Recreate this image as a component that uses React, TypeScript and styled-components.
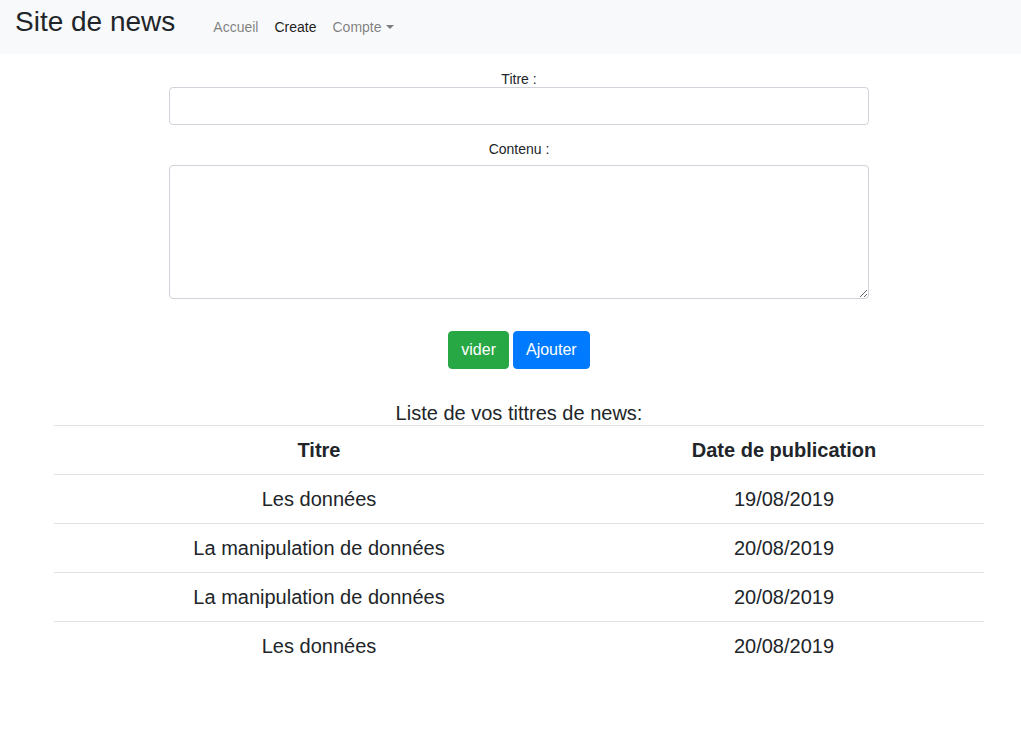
import React from "react";
import styled, { createGlobalStyle } from "styled-components";

const GlobalStyle = createGlobalStyle`
  html, body { margin: 0; padding: 0; background: #fff; }
  body {
    font-family: "Liberation Sans", Arial, sans-serif;
    color: #212529;
  }
  * { box-sizing: border-box; }
`;

const Navbar = styled.nav`
  height: 54px;
  background: #f8f9fa;
  display: flex;
  align-items: flex-start;
  padding: 5px 16px 0 15px;
`;

const Brand = styled.a`
  font-size: 28px;
  line-height: 34px;
  color: #212529;
  text-decoration: none;
  margin-right: 30px;
`;

const NavLink = styled.a<{ $active?: boolean }>`
  font-size: 14px;
  line-height: 21px;
  margin-top: 12px;
  padding: 0 8px;
  color: ${(p) => (p.$active ? "rgba(0,0,0,0.9)" : "rgba(0,0,0,0.5)")};
  text-decoration: none;
  display: inline-flex;
  align-items: center;
`;

const Caret = styled.span`
  display: inline-block;
  margin-left: 4px;
  width: 0;
  height: 0;
  border-top: 4px solid rgba(0,0,0,0.5);
  border-left: 4px solid transparent;
  border-right: 4px solid transparent;
  transform: translateY(-1px);
`;

const Container = styled.main`
  margin-left: 54px;
  width: 930px;
`;

const Form = styled.form`
  width: 700px;
  margin: 0 auto;
  padding-top: 18px;
  display: flex;
  flex-direction: column;
`;

const Label = styled.label<{ $mt: number; $mb: number }>`
  display: block;
  text-align: center;
  font-size: 14px;
  line-height: 14px;
  margin-top: ${(p) => p.$mt}px;
  margin-bottom: ${(p) => p.$mb}px;
`;

const Input = styled.input`
  display: block;
  width: 100%;
  height: 38px;
  border: 1px solid #ced4da;
  border-radius: 4px;
  font-family: inherit;
  font-size: 16px;
  padding: 6px 12px;
  background: #fff;
`;

const TextArea = styled.textarea`
  display: block;
  width: 100%;
  height: 134px;
  border: 1px solid #ced4da;
  border-radius: 4px;
  font-family: inherit;
  font-size: 16px;
  padding: 6px 12px;
  resize: vertical;
  background: #fff;
`;

const Actions = styled.div`
  display: flex;
  justify-content: center;
  gap: 4px;
  margin-top: 32px;
`;

const Button = styled.button<{ $variant: "success" | "primary" }>`
  height: 38px;
  padding: 0 12px;
  font-family: inherit;
  font-size: 16px;
  line-height: 24px;
  color: #fff;
  border-radius: 4px;
  border: 1px solid ${(p) => (p.$variant === "success" ? "#28a745" : "#007bff")};
  background: ${(p) => (p.$variant === "success" ? "#28a745" : "#007bff")};
  cursor: pointer;
`;

const Table = styled.table`
  width: 930px;
  margin-top: 32px;
  border-collapse: collapse;
  table-layout: fixed;
  font-size: 20px;
  line-height: 24px;
`;

const Caption = styled.caption`
  caption-side: top;
  text-align: center;
  padding: 0;
  font-size: 20px;
  line-height: 24px;
  color: #212529;
`;

const Th = styled.th<{ $w?: number }>`
  width: ${(p) => (p.$w ? `${p.$w}px` : "auto")};
  padding: 12px;
  border-top: 1px solid #dee2e6;
  font-weight: bold;
  text-align: center;
`;

const Td = styled.td`
  padding: 12px;
  border-top: 1px solid #dee2e6;
  text-align: center;
`;

const rows = [
  ["Les données", "19/08/2019"],
  ["La manipulation de données", "20/08/2019"],
  ["La manipulation de données", "20/08/2019"],
  ["Les données", "20/08/2019"],
];

export default function App() {
  return (
    <>
      <GlobalStyle />
      <Navbar>
        <Brand href="#">Site de news</Brand>
        <NavLink href="#">Accueil</NavLink>
        <NavLink href="#" $active>Create</NavLink>
        <NavLink href="#">
          Compte<Caret />
        </NavLink>
      </Navbar>
      <Container>
        <Form onSubmit={(e) => e.preventDefault()}>
          <Label htmlFor="titre" $mt={0} $mb={1}>Titre :</Label>
          <Input id="titre" type="text" />
          <Label htmlFor="contenu" $mt={17} $mb={9}>Contenu :</Label>
          <TextArea id="contenu" />
          <Actions>
            <Button type="reset" $variant="success">vider</Button>
            <Button type="submit" $variant="primary">Ajouter</Button>
          </Actions>
        </Form>
        <Table>
          <Caption>Liste de vos tittres de news:</Caption>
          <thead>
            <tr>
              <Th $w={530}>Titre</Th>
              <Th>Date de publication</Th>
            </tr>
          </thead>
          <tbody>
            {rows.map((r, i) => (
              <tr key={i}>
                <Td>{r[0]}</Td>
                <Td>{r[1]}</Td>
              </tr>
            ))}
          </tbody>
        </Table>
      </Container>
    </>
  );
}
